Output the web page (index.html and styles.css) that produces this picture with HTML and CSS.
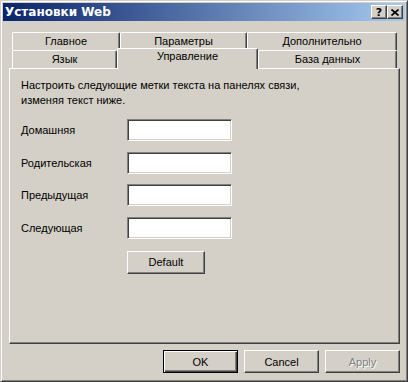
FILE: index.html
```html
<!DOCTYPE html>
<html lang="ru">
<head>
    <meta charset="UTF-8">
    <meta name="viewport" content="width=device-width, initial-scale=1.0">
    <title>Установки Web</title>
    <link rel="stylesheet" href="styles.css">
</head>
<body>
    <div class="window">
        <div class="titlebar">
            <span class="title">Установки Web</span>
            <div class="caption-buttons">
                <button class="caption-btn help">?</button>
                <button class="caption-btn close">
                    <svg width="8" height="7" viewBox="0 0 8 7">
                        <path d="M0.5 0.5L7.5 6.5M7.5 0.5L0.5 6.5" stroke="#000" stroke-width="1.7" fill="none"/>
                    </svg>
                </button>
            </div>
        </div>

        <div class="dialog">
            <div class="tabs">
                <div class="tab-row">
                    <div class="tab tab-main">Главное</div>
                    <div class="tab tab-params">Параметры</div>
                    <div class="tab tab-extra">Дополнительно</div>
                </div>
                <div class="tab-row">
                    <div class="tab tab-lang">Язык</div>
                    <div class="tab tab-control selected">Управление</div>
                    <div class="tab tab-db">База данных</div>
                </div>
            </div>

            <div class="panel">
                <p class="intro">Настроить следующие метки текста на панелях связи,<br>изменяя текст ниже.</p>

                <div class="fields">
                    <div class="field">
                        <label for="home">Домашняя</label>
                        <input type="text" id="home">
                    </div>
                    <div class="field">
                        <label for="parent">Родительская</label>
                        <input type="text" id="parent">
                    </div>
                    <div class="field">
                        <label for="prev">Предыдущая</label>
                        <input type="text" id="prev">
                    </div>
                    <div class="field">
                        <label for="next">Следующая</label>
                        <input type="text" id="next">
                    </div>
                </div>

                <button class="btn btn-default">Default</button>
            </div>

            <div class="footer">
                <button class="btn primary">OK</button>
                <button class="btn">Cancel</button>
                <button class="btn" disabled>Apply</button>
            </div>
        </div>
    </div>
</body>
</html>
```

FILE: styles.css
```css
body {
    margin: 0;
    font-family: 'Liberation Sans', Arial, sans-serif;
    font-size: 11px;
    color: #000;
}
.window {
    width: 408px;
    height: 382px;
    box-sizing: border-box;
    background-color: #d4d0c8;
    border: 1px solid;
    border-color: #d4d0c8 #404040 #404040 #d4d0c8;
    box-shadow: inset 1px 1px #fff, inset -1px -1px #808080;
    padding: 2px;
}
.titlebar {
    height: 18px;
    display: flex;
    align-items: center;
    justify-content: space-between;
    padding: 0 2px;
    background: linear-gradient(to right, #0a246a, #a6caf0);
}
.title {
    color: #fff;
    font-family: 'DejaVu Sans', Verdana, sans-serif;
    font-weight: bold;
    font-size: 12px;
}
.caption-buttons {
    display: flex;
}
.caption-btn {
    width: 16px;
    height: 14px;
    box-sizing: border-box;
    padding: 0;
    margin: 0;
    display: flex;
    align-items: center;
    justify-content: center;
    background-color: #d4d0c8;
    border: 1px solid;
    border-color: #fff #404040 #404040 #fff;
    box-shadow: inset -1px -1px #808080;
    font-family: 'DejaVu Sans', Verdana, sans-serif;
    font-weight: bold;
    font-size: 11px;
    line-height: 1;
    color: #000;
}
.dialog {
    padding: 11px 5px 0 6px;
}
.tab-row {
    display: flex;
    height: 18px;
    padding-left: 3px;
}
.tab {
    box-sizing: border-box;
    height: 18px;
    background-color: #d4d0c8;
    border-top: 1px solid #fff;
    border-left: 1px solid #fff;
    border-right: 1px solid #404040;
    border-radius: 2px 2px 0 0;
    box-shadow: inset -1px 0 #808080;
    text-align: center;
    line-height: 17px;
}
.tab-main { width: 108px; }
.tab-params { width: 127px; }
.tab-extra { width: 150px; }
.tab-lang { width: 105px; }
.tab-control { width: 141px; }
.tab-db { width: 139px; }
.tab.selected {
    position: relative;
    z-index: 1;
    height: 21px;
    margin-top: -2px;
    line-height: 15px;
}
.panel {
    box-sizing: border-box;
    height: 276px;
    border-top: 1px solid #fff;
    border-left: 1px solid #fff;
    border-right: 1px solid #404040;
    border-bottom: 1px solid #404040;
    box-shadow: inset -1px -1px #808080;
    padding: 9px 11px;
}
.intro {
    margin: 0;
    line-height: 15px;
}
.fields {
    margin-top: 11px;
    display: flex;
    flex-direction: column;
    gap: 10.5px;
}
.field {
    display: flex;
    align-items: center;
    height: 22px;
}
.field label {
    width: 106px;
}
.field input {
    width: 105px;
    height: 22px;
    box-sizing: border-box;
    margin: 0;
    padding: 0 3px;
    border: 1px solid;
    border-color: #808080 #fff #fff #808080;
    box-shadow: inset 1px 1px #404040, inset -1px -1px #d4d0c8;
    background-color: #fff;
    font: inherit;
    outline: none;
}
.btn {
    width: 75px;
    height: 23px;
    box-sizing: border-box;
    margin: 0;
    padding: 0;
    background-color: #d4d0c8;
    border: 1px solid;
    border-color: #fff #404040 #404040 #fff;
    box-shadow: inset -1px -1px #808080;
    font-family: 'Liberation Sans', Arial, sans-serif;
    font-size: 11px;
    color: #000;
}
.btn-default {
    width: 78px;
    margin: 12px 0 0 106px;
}
.btn.primary {
    border-color: #000;
    box-shadow: inset 1px 1px #fff, inset -1px -1px #404040, inset -2px -2px #808080;
}
.btn:disabled {
    color: #808080;
    text-shadow: 1px 1px 0 #fff;
}
.footer {
    display: flex;
    justify-content: flex-end;
    gap: 6px;
    margin-top: 6px;
}
```
